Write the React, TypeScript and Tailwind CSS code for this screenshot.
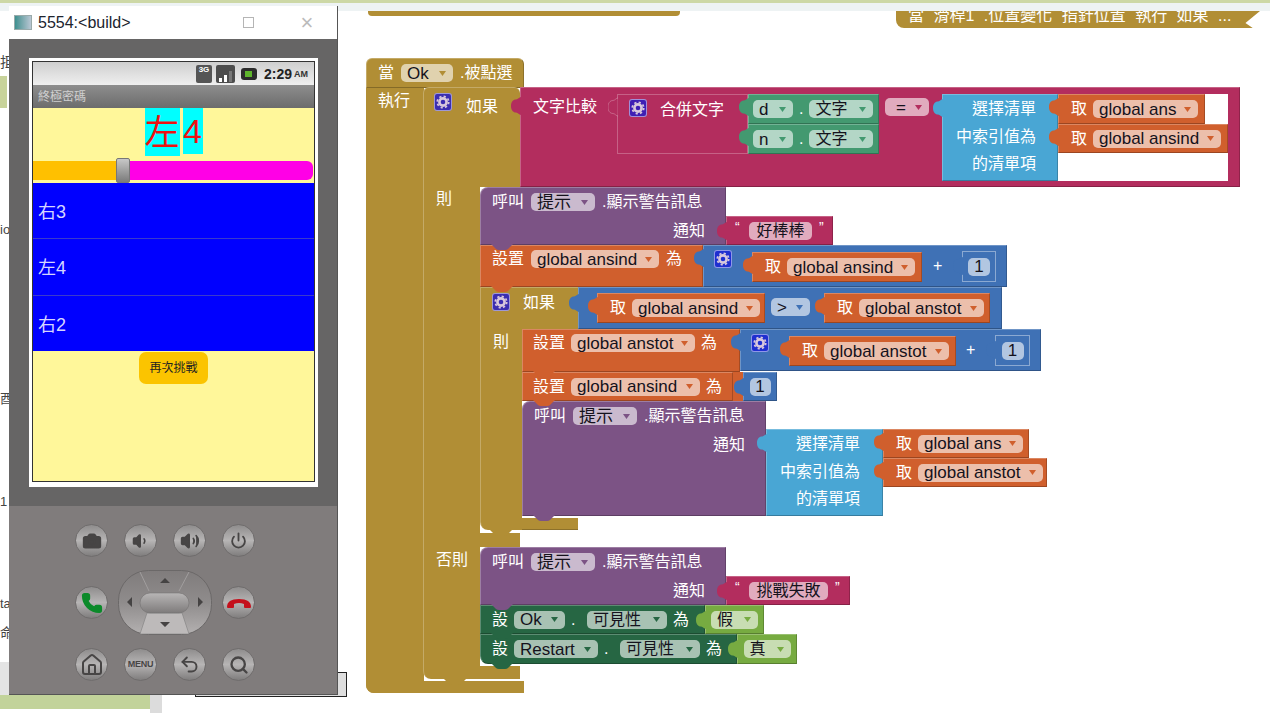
import type { ReactNode } from "react";
import { Camera, Volume1, Volume2, Power, Phone, House, Undo2, Search } from "lucide-react";

const GOLD = "bg-[#b18e35]";
const edge = "border border-white/25 border-r-black/20 border-b-black/25";

function B({ c, children }: { c: string; children?: ReactNode }) {
  return <div className={`absolute flex items-center ${edge} ${c}`}>{children}</div>;
}

function L({ children, c = "" }: { children: ReactNode; c?: string }) {
  return <span className={`text-[16px] leading-none whitespace-nowrap text-white ${c}`}>{children}</span>;
}

function Pill({ children, c, arrow }: { children: ReactNode; c: string; arrow: string }) {
  return (
    <span className={`flex h-[18px] shrink-0 items-center justify-between rounded-[5px] bg-white/60 pl-[6px] pr-[7px] text-[17px] leading-none whitespace-nowrap text-[#15121c] ${c}`}>
      {children}
      <svg width="7" height="5" viewBox="0 0 7 5" className={arrow}>
        <path d="M0 0H7L3.5 5Z" />
      </svg>
    </span>
  );
}

// left-facing plug of a value block
function Tab({ fill, top = "top-[2px]" }: { fill: string; top?: string }) {
  return (
    <svg width="10" height="20" viewBox="0 0 10 20" className={`absolute left-[-10px] ${top} ${fill}`}>
      <path d="M10 1C8 1 7 3.5 5 3.5C2 3.5 0 6 0 10C0 14 2 16.5 5 16.5C7 16.5 8 19 10 19Z" />
    </svg>
  );
}

// notch under a statement block
function Bump({ fill, left = "left-[10px]" }: { fill: string; left?: string }) {
  return (
    <svg width="22" height="6" viewBox="0 0 22 6" className={`absolute bottom-[-6px] z-10 ${left} ${fill}`}>
      <path d="M0 0H22L17 5Q16 6 14 6H8Q6 6 5 5Z" />
    </svg>
  );
}

function Gear({ c }: { c: string }) {
  return (
    <span className={`flex h-[18px] w-[18px] shrink-0 items-center justify-center rounded-[3px] border border-white/50 ${c}`}>
      <svg width="14" height="14" viewBox="0 0 14 14" fill="none" stroke="#d8c8dc">
        <circle cx="7" cy="7" r="3.6" strokeWidth="2.6" />
        <circle cx="7" cy="7" r="5.7" strokeWidth="1.8" strokeDasharray="2.2 2.27" />
      </svg>
    </span>
  );
}

function Get({ pos, pill, name }: { pos: string; pill: string; name: string }) {
  return (
    <B c={`${pos} bg-[#d05f2d] gap-[6px] pl-[12px]`}>
      <Tab fill="fill-[#d05f2d]" />
      <L>取</L>
      <Pill c={pill} arrow="fill-[#d05f2d]">{name}</Pill>
    </B>
  );
}

function ListItem({ pos, pr }: { pos: string; pr: string }) {
  return (
    <div className={`absolute flex flex-col pb-[2px] bg-[#49a6d4] ${edge} ${pos} ${pr}`}>
      <Tab fill="fill-[#49a6d4]" top="top-[3px]" />
      <div className="flex flex-1 items-center justify-end"><L>選擇清單</L></div>
      <div className="flex flex-1 items-center justify-end"><L>中索引值為</L></div>
      <div className="flex flex-1 items-center justify-end"><L>的清單項</L></div>
    </div>
  );
}

function NumBox({ pos, pill }: { pos: string; pill: string }) {
  return (
    <div className={`absolute flex items-center justify-center border border-white/40 bg-[#3f71b5] ${pos}`}>
      <Tab fill="fill-[#3f71b5]" top="top-[4px]" />
      <span className={`flex h-[18px] items-center justify-center rounded-[5px] bg-white/60 text-[17px] leading-none text-[#15121c] ${pill}`}>1</span>
    </div>
  );
}

function Call({ pos, bump = true }: { pos: string; bump?: boolean }) {
  return (
    <div className={`absolute rounded-tl-[8px] bg-[#7c5385] ${edge} ${pos}`}>
      <div className="flex h-[28px] items-center gap-[7px] pl-[11px]">
        <L>呼叫</L>
        <Pill c="w-[64px]" arrow="fill-[#7c5385]">提示</Pill>
        <L>.顯示警告訊息</L>
      </div>
      <div className="mt-[1px] flex h-[28px] items-center justify-end pr-[20px]">
        <L>通知</L>
      </div>
      {bump && <Bump fill="fill-[#7c5385]" />}
    </div>
  );
}

function Str({ pos, pill, text }: { pos: string; pill: string; text: string }) {
  return (
    <B c={`${pos} bg-[#b32d5e] gap-[2px] pl-[8px]`}>
      <Tab fill="fill-[#b32d5e]" top="top-[4px]" />
      <span className="w-[12px] self-start pt-[3px] text-[14px] leading-none text-white">“</span>
      <span className={`flex h-[18px] items-center justify-center rounded-[5px] bg-white/60 text-[16px] leading-none text-[#15121c] ${pill}`}>{text}</span>
      <span className="ml-[5px] self-start pt-[3px] text-[14px] leading-none text-white">”</span>
    </B>
  );
}

function TextGet({ pos, name }: { pos: string; name: string }) {
  return (
    <B c={`${pos} bg-[#439970] gap-[6px] pl-[4px]`}>
      <Tab fill="fill-[#439970]" />
      <Pill c="w-[40px]" arrow="fill-[#439970]">{name}</Pill>
      <L c="text-[12px]">.</L>
      <Pill c="w-[64px]" arrow="fill-[#439970]"><span className="text-[16px]">文字</span></Pill>
    </B>
  );
}

function Key({ children }: { children: ReactNode }) {
  return (
    <span className="flex h-[33px] w-[33px] items-center justify-center rounded-full border border-[#6f6c6c] bg-linear-to-b from-[#8f8d8d] via-[#b7b5b5] to-[#7f7d7d] text-[#474545]">
      {children}
    </span>
  );
}

function Dpad() {
  return (
    <svg width="94" height="65" viewBox="0 0 94 65" className="-mx-[6px] -my-[16px]">
      <defs>
        <linearGradient id="dp" x1="0" y1="0" x2="0" y2="1">
          <stop offset="0" stopColor="#807c7c" />
          <stop offset="0.5" stopColor="#8f8c8c" />
          <stop offset="1" stopColor="#b4b1b1" />
        </linearGradient>
        <linearGradient id="dc" x1="0" y1="0" x2="0" y2="1">
          <stop offset="0" stopColor="#b8b6b6" />
          <stop offset="1" stopColor="#7e7b7b" />
        </linearGradient>
      </defs>
      <rect x="0.5" y="0.5" width="93" height="64" rx="30" fill="url(#dp)" stroke="#6b6868" />
      <path d="M29 43H64L71 64H22Z" fill="#bdbaba" stroke="#777" strokeWidth="0.5" />
      <path d="M22 2L31 21M71 2L61 21" stroke="#a19e9e" fill="none" />
      <rect x="22" y="23" width="49" height="20" rx="10" fill="url(#dc)" stroke="#6f6c6c" strokeWidth="0.5" />
      <path d="M47 8L52 13H42ZM47 57L42 52H52ZM9 32L14 27V37ZM85 32L80 27V37Z" fill="#454343" />
    </svg>
  );
}

function PhoneWindow() {
  return (
    <div className="absolute left-[9px] top-[6px] z-20 flex h-[689px] w-[329px] flex-col border-r border-b border-[#555]">
      <div className="flex h-[33px] items-center bg-white pl-[5px]">
        <span className="h-[15px] w-[18px] border border-[#9aa] bg-linear-to-r from-[#3b8f8f] to-[#b9c7d4]" />
        <span className="ml-[6px] text-[16px] leading-none text-[#20242e]">5554:&lt;build&gt;</span>
        <span className="ml-[112px] h-[11px] w-[11px] border border-[#b5b5b5]" />
        <span className="ml-[47px] text-[22px] font-light leading-none text-[#bbb]">×</span>
      </div>
      <div className="h-[467px] bg-[#666565] pl-[20px] pt-[19px]">
        <div className="h-[429px] w-[289px] bg-white p-[3px]">
          <div className="flex h-[421px] flex-col border border-[#333]">
            <div className="flex h-[23px] items-center justify-end bg-linear-to-b from-[#cfcfcf] to-[#efefef] pr-[6px]">
              <span className="flex h-[18px] w-[16px] items-start justify-center rounded-[2px] bg-[#555] text-[8px] font-bold leading-[10px] text-white">3G</span>
              <span className="ml-[4px] flex h-[18px] w-[19px] items-end justify-center gap-[2px] rounded-[2px] bg-[#4d4d4d] pb-[1px]">
                <span className="h-[4px] w-[3px] bg-white" />
                <span className="h-[7px] w-[3px] bg-white" />
                <span className="h-[11px] w-[3px] bg-[#777]" />
              </span>
              <span className="ml-[6px] flex h-[12px] w-[16px] items-center justify-center rounded-[3px] bg-[#2c2c2c]">
                <span className="h-[6px] w-[7px] bg-[#5fb52c]" />
              </span>
              <span className="ml-[7px] text-[14px] font-bold leading-none text-[#222]">2:29</span>
              <span className="ml-[2px] mt-[2px] text-[9px] font-bold leading-none text-[#333]">AM</span>
            </div>
            <div className="flex h-[23px] items-center bg-linear-to-b from-[#8e8e8e] to-[#6c6c6c] pl-[5px] text-[12px] leading-none text-[#cfcfcf]">終極密碼</div>
            <div className="flex flex-1 flex-col bg-[#fff79a]">
              <div className="flex h-[50px] items-start justify-center gap-[3px]">
                <span className="flex h-[48px] w-[35px] items-center justify-center bg-[#00ffff] text-[35px] leading-none text-[#ee1111]">左</span>
                <span className="flex h-[46px] w-[20px] items-center justify-center bg-[#00ffff] text-[34px] leading-none text-[#ee1111]">4</span>
              </div>
              <div className="relative mt-[3px] flex h-[19px] pr-[1px]">
                <span className="w-[86px] bg-[#ffc000]" />
                <span className="flex-1 rounded-r-[6px] bg-[#ff00e6]" />
                <span className="absolute left-[83px] top-[-3px] h-[25px] w-[14px] rounded-[2px] border border-[#777] bg-linear-to-b from-[#c8c8c8] to-[#7b7b7b]" />
              </div>
              <div className="mt-[3px] flex h-[168px] flex-col bg-[#0000ff] text-[18px] leading-none text-[#d5d5ff]">
                <span className="flex h-[56px] items-center border-b border-[#3a3acc] pl-[5px] pt-[2px]">右3</span>
                <span className="flex h-[57px] items-center border-b border-[#3a3acc] pl-[5px] pt-[2px]">左4</span>
                <span className="flex h-[55px] items-center pl-[5px] pt-[2px]">右2</span>
              </div>
              <button className="mx-auto mt-[1px] flex h-[32px] w-[69px] items-center justify-center rounded-[7px] bg-[#fbc400] text-[12px] leading-none text-[#222]">再次挑戰</button>
            </div>
          </div>
        </div>
      </div>
      <div className="flex-1 bg-[#807c7c] pl-[66px] pt-[18px]">
        <div className="grid grid-cols-[33px_33px_33px_33px] gap-x-[16px] gap-y-[29px]">
          <Key><Camera size={20} strokeWidth={2} fill="currentColor" stroke="#474545" /></Key>
          <Key><Volume1 size={18} fill="currentColor" /></Key>
          <Key><Volume2 size={20} fill="currentColor" /></Key>
          <Key><Power size={17} strokeWidth={2.6} /></Key>
          <Key><Phone size={22} fill="#0b8a2a" stroke="#0b8a2a" /></Key>
          <div className="col-span-2 flex items-center justify-center"><Dpad /></div>
          <Key>
            <svg width="26" height="12" viewBox="0 0 26 12">
              <path d="M1 10Q1 2 13 2T25 10Q25 11 24 11H19Q18 11 18 10V7Q13 5 8 7V10Q8 11 7 11H2Q1 11 1 10Z" fill="#c4101c" />
            </svg>
          </Key>
          <Key><House size={24} strokeWidth={2} /></Key>
          <Key><span className="text-[9px] font-bold leading-none tracking-[-0.2px]">MENU</span></Key>
          <Key><Undo2 size={21} strokeWidth={2.2} /></Key>
          <Key><Search size={20} strokeWidth={2.8} /></Key>
        </div>
      </div>
    </div>
  );
}

function Backdrop() {
  return (
    <>
      <div className="absolute left-0 top-0 z-10 h-[3px] w-full bg-[#cdd8a6]" />
      <div className="absolute left-0 top-[3px] z-10 h-[8px] w-full bg-[#eef3f4]" />
      <div className="absolute left-0 top-[76px] h-[32px] w-[7px] bg-[#c8d39a]" />
      <div className="absolute left-0 top-[55px] text-[14px] leading-none text-[#444]">拒</div>
      <div className="absolute left-0 top-[223px] text-[13px] leading-none text-[#444]">io</div>
      <div className="absolute left-0 top-[392px] text-[13px] leading-none text-[#444]">酉</div>
      <div className="absolute left-0 top-[495px] text-[13px] leading-none text-[#444]">1</div>
      <div className="absolute left-0 top-[597px] text-[13px] leading-none text-[#444]">ta</div>
      <div className="absolute left-0 top-[626px] text-[13px] leading-none text-[#444]">命</div>
      <div className="absolute left-0 top-[662px] h-[33px] w-[9px] bg-[#e4e4e4]" />
      <div className="absolute left-0 top-[695px] h-[14px] w-[150px] bg-[#c2d39a]" />
      <div className="absolute left-[150px] top-[695px] h-[18px] w-[12px] bg-[#dcdcdc]" />
      <div className="absolute left-[195px] top-[672px] h-[25px] w-[152px] border border-[#222] bg-[#dedede]" />
    </>
  );
}

export default function App() {
  return (
    <div className="relative h-[713px] w-[1270px] overflow-hidden bg-white font-['Liberation_Sans','Noto_Sans_CJK_TC',sans-serif]">
      <Backdrop />
      <PhoneWindow />

      {/* collapsed blocks cut by the top edge */}
      <div className={`absolute left-[368px] top-[11px] h-[5px] w-[312px] rounded-b-[4px] ${GOLD}`} />
      <div className={`absolute left-[896px] top-[11px] flex h-[17px] w-[364px] items-center rounded-bl-[8px] pl-[12px] [clip-path:polygon(0_0,100%_0,96%_70%,98%_100%,0_100%)] ${GOLD}`}>
        <L c="-mt-[8px] [word-spacing:5px]">當 滑桿1 .位置變化 指針位置 執行 如果 ...</L>
      </div>

      {/* gold control frame */}
      <div className={`absolute left-[366px] top-[87px] flex h-[606px] w-[58px] items-start rounded-bl-[8px] pl-[12px] pt-[6px] ${GOLD}`}>
        <L>執行</L>
      </div>
      <B c={`left-[366px] top-[58px] h-[30px] w-[158px] gap-[7px] rounded-t-[6px] pl-[11px] ${GOLD}`}>
        <L>當</L>
        <Pill c="w-[52px]" arrow="fill-[#b18e35]">Ok</Pill>
        <L>.被點選</L>
      </B>
      <div className={`absolute left-[366px] top-[681px] h-[12px] w-[158px] rounded-bl-[8px] ${GOLD}`} />
      <div className={`absolute left-[423px] top-[87px] flex h-[100px] w-[97px] items-start gap-[14px] rounded-t-[6px] border-l border-t border-white/25 pl-[10px] pt-[5px] ${GOLD}`}>
        <Gear c="bg-[#3b2eb0]" />
        <L c="pt-[6px]">如果</L>
      </div>
      <div className={`absolute left-[423px] top-[187px] h-[492px] w-[57px] rounded-bl-[8px] border-l border-white/25 pl-[12px] ${GOLD}`}>
        <L c="absolute top-[4px]">則</L>
        <L c="absolute top-[365px]">否則</L>
        <Bump fill="fill-[#b18e35]" left="left-[20px]" />
      </div>
      <div className={`absolute left-[480px] top-[533px] h-[14px] w-[40px] ${GOLD}`} />
      <div className={`absolute left-[480px] top-[666px] h-[13px] w-[40px] ${GOLD}`} />

      {/* if condition */}
      <B c="left-[520px] top-[87px] h-[100px] w-[720px] items-start bg-[#b32d5e] pl-[12px] pt-[11px]">
        <Tab fill="fill-[#b32d5e]" top="top-[8px]" />
        <L>文字比較</L>
      </B>
      <div className="absolute left-[617px] top-[94px] flex h-[60px] w-[131px] items-start gap-[13px] border border-white/25 bg-[#b32d5e] pl-[11px] pt-[4px]">
        <Tab fill="fill-[#b32d5e] stroke-white/25" />
        <Gear c="bg-[#3e1fb4]" />
        <L c="pt-[3px]">合併文字</L>
      </div>
      <TextGet pos="left-[748px] top-[94px] h-[30px] w-[131px]" name="d" />
      <TextGet pos="left-[748px] top-[124px] h-[30px] w-[131px]" name="n" />
      <div className="absolute left-[885px] top-[98px]">
        <Pill c="w-[44px] pl-[11px]" arrow="fill-[#b32d5e]">=</Pill>
      </div>
      <div className="absolute left-[1058px] top-[94px] h-[87px] w-[170px] bg-white" />
      <ListItem pos="left-[942px] top-[94px] h-[87px] w-[116px]" pr="pr-[21px]" />
      <Get pos="left-[1058px] top-[94px] h-[30px] w-[147px]" pill="w-[105px]" name="global ans" />
      <Get pos="left-[1058px] top-[124px] h-[29px] w-[170px]" pill="w-[128px]" name="global ansind" />

      {/* then: first alert */}
      <Call pos="left-[480px] top-[187px] h-[58px] w-[246px]" />
      <Str pos="left-[726px] top-[216px] h-[29px] w-[107px]" pill="w-[63px]" text="好棒棒" />

      <B c="left-[480px] top-[245px] h-[42px] w-[223px] items-start gap-[7px] bg-[#d05f2d] pl-[11px] pt-[4px]">
        <L c="pt-[1px]">設置</L>
        <Pill c="w-[128px]" arrow="fill-[#d05f2d]">global ansind</Pill>
        <L c="pt-[1px]">為</L>
        <Bump fill="fill-[#d05f2d]" />
      </B>
      <B c="left-[703px] top-[245px] h-[42px] w-[304px] items-start bg-[#3f71b5] pl-[10px] pt-[4px]">
        <Tab fill="fill-[#3f71b5]" />
        <Gear c="bg-[#1f2fd0]" />
      </B>
      <Get pos="left-[752px] top-[252px] h-[30px] w-[170px]" pill="w-[128px]" name="global ansind" />
      <L c="absolute left-[933px] top-[258px]">+</L>
      <NumBox pos="left-[962px] top-[251px] h-[31px] w-[34px]" pill="w-[22px]" />

      {/* nested if */}
      <div className={`absolute left-[480px] top-[287px] flex h-[42px] w-[98px] items-start gap-[13px] border-l border-t border-white/25 pl-[11px] pt-[5px] ${GOLD}`}>
        <Gear c="bg-[#3b2eb0]" />
        <L c="pt-[2px]">如果</L>
      </div>
      <div className={`absolute left-[480px] top-[329px] h-[201px] w-[42px] rounded-bl-[8px] border-l border-white/25 pl-[12px] ${GOLD}`}>
        <L c="absolute top-[5px]">則</L>
      </div>
      <div className={`absolute left-[522px] top-[518px] h-[12px] w-[56px] border-b border-black/20 ${GOLD}`} />
      <Bump fill="fill-[#b18e35]" left="left-[490px] top-[530px]" />
      <B c="left-[578px] top-[287px] h-[42px] w-[424px] bg-[#3f71b5]">
        <Tab fill="fill-[#3f71b5]" top="top-[5px]" />
      </B>
      <Get pos="left-[597px] top-[293px] h-[30px] w-[168px]" pill="w-[128px]" name="global ansind" />
      <div className="absolute left-[771px] top-[298px]">
        <Pill c="w-[39px]" arrow="fill-[#3f71b5]">&gt;</Pill>
      </div>
      <Get pos="left-[824px] top-[293px] h-[30px] w-[166px]" pill="w-[125px]" name="global anstot" />

      <B c="left-[522px] top-[329px] h-[43px] w-[218px] items-start gap-[6px] bg-[#d05f2d] pl-[10px] pt-[4px]">
        <L c="pt-[1px]">設置</L>
        <Pill c="w-[124px]" arrow="fill-[#d05f2d]">global anstot</Pill>
        <L c="pt-[1px]">為</L>
        <Bump fill="fill-[#d05f2d]" />
      </B>
      <B c="left-[740px] top-[329px] h-[42px] w-[301px] items-start bg-[#3f71b5] pl-[10px] pt-[4px]">
        <Tab fill="fill-[#3f71b5]" />
        <Gear c="bg-[#1f2fd0]" />
      </B>
      <Get pos="left-[789px] top-[336px] h-[30px] w-[167px]" pill="w-[125px]" name="global anstot" />
      <L c="absolute left-[966px] top-[342px]">+</L>
      <NumBox pos="left-[995px] top-[335px] h-[31px] w-[35px]" pill="w-[22px]" />

      <B c="left-[522px] top-[372px] h-[29px] w-[211px] gap-[6px] bg-[#d05f2d] pl-[10px]">
        <L>設置</L>
        <Pill c="w-[129px]" arrow="fill-[#d05f2d]">global ansind</Pill>
        <L>為</L>
        <Bump fill="fill-[#d05f2d]" />
      </B>
      <div className="absolute left-[733px] top-[372px] h-[29px] w-[10px] bg-[#d05f2d]" />
      <B c="left-[743px] top-[372px] h-[29px] w-[34px] justify-center bg-[#3f71b5]">
        <Tab fill="fill-[#3f71b5]" top="top-[4px]" />
        <span className="flex h-[18px] w-[21px] items-center justify-center rounded-[5px] bg-white/60 text-[17px] leading-none text-[#15121c]">1</span>
      </B>

      <Call pos="left-[522px] top-[401px] h-[115px] w-[244px]" />
      <ListItem pos="left-[766px] top-[429px] h-[87px] w-[117px]" pr="pr-[22px]" />
      <Get pos="left-[883px] top-[429px] h-[29px] w-[146px]" pill="w-[105px]" name="global ans" />
      <Get pos="left-[883px] top-[458px] h-[29px] w-[164px]" pill="w-[125px]" name="global anstot" />

      {/* else */}
      <Call pos="left-[480px] top-[547px] h-[58px] w-[246px]" />
      <Str pos="left-[726px] top-[576px] h-[29px] w-[124px]" pill="w-[79px]" text="挑戰失敗" />
      <B c="left-[480px] top-[605px] h-[29px] w-[225px] gap-[6px] bg-[#266643] pl-[11px]">
        <L>設</L>
        <Pill c="w-[51px]" arrow="fill-[#266643]">Ok</Pill>
        <L c="w-[10px] text-[12px]">.</L>
        <Pill c="w-[80px]" arrow="fill-[#266643]"><span className="text-[16px]">可見性</span></Pill>
        <L>為</L>
        <Bump fill="fill-[#266643]" />
      </B>
      <B c="left-[705px] top-[605px] h-[29px] w-[59px] justify-center bg-[#77ab41]">
        <Tab fill="fill-[#77ab41]" top="top-[4px]" />
        <Pill c="w-[47px]" arrow="fill-[#77ab41]"><span className="text-[16px]">假</span></Pill>
      </B>
      <B c="left-[480px] top-[634px] h-[30px] w-[257px] gap-[6px] rounded-bl-[8px] bg-[#266643] pl-[11px]">
        <L>設</L>
        <Pill c="w-[84px]" arrow="fill-[#266643]">Restart</Pill>
        <L c="w-[10px] text-[12px]">.</L>
        <Pill c="w-[80px]" arrow="fill-[#266643]"><span className="text-[16px]">可見性</span></Pill>
        <L>為</L>
        <Bump fill="fill-[#266643]" />
      </B>
      <B c="left-[737px] top-[634px] h-[30px] w-[60px] justify-center bg-[#77ab41]">
        <Tab fill="fill-[#77ab41]" top="top-[4px]" />
        <Pill c="w-[47px]" arrow="fill-[#77ab41]"><span className="text-[16px]">真</span></Pill>
      </B>
    </div>
  );
}
